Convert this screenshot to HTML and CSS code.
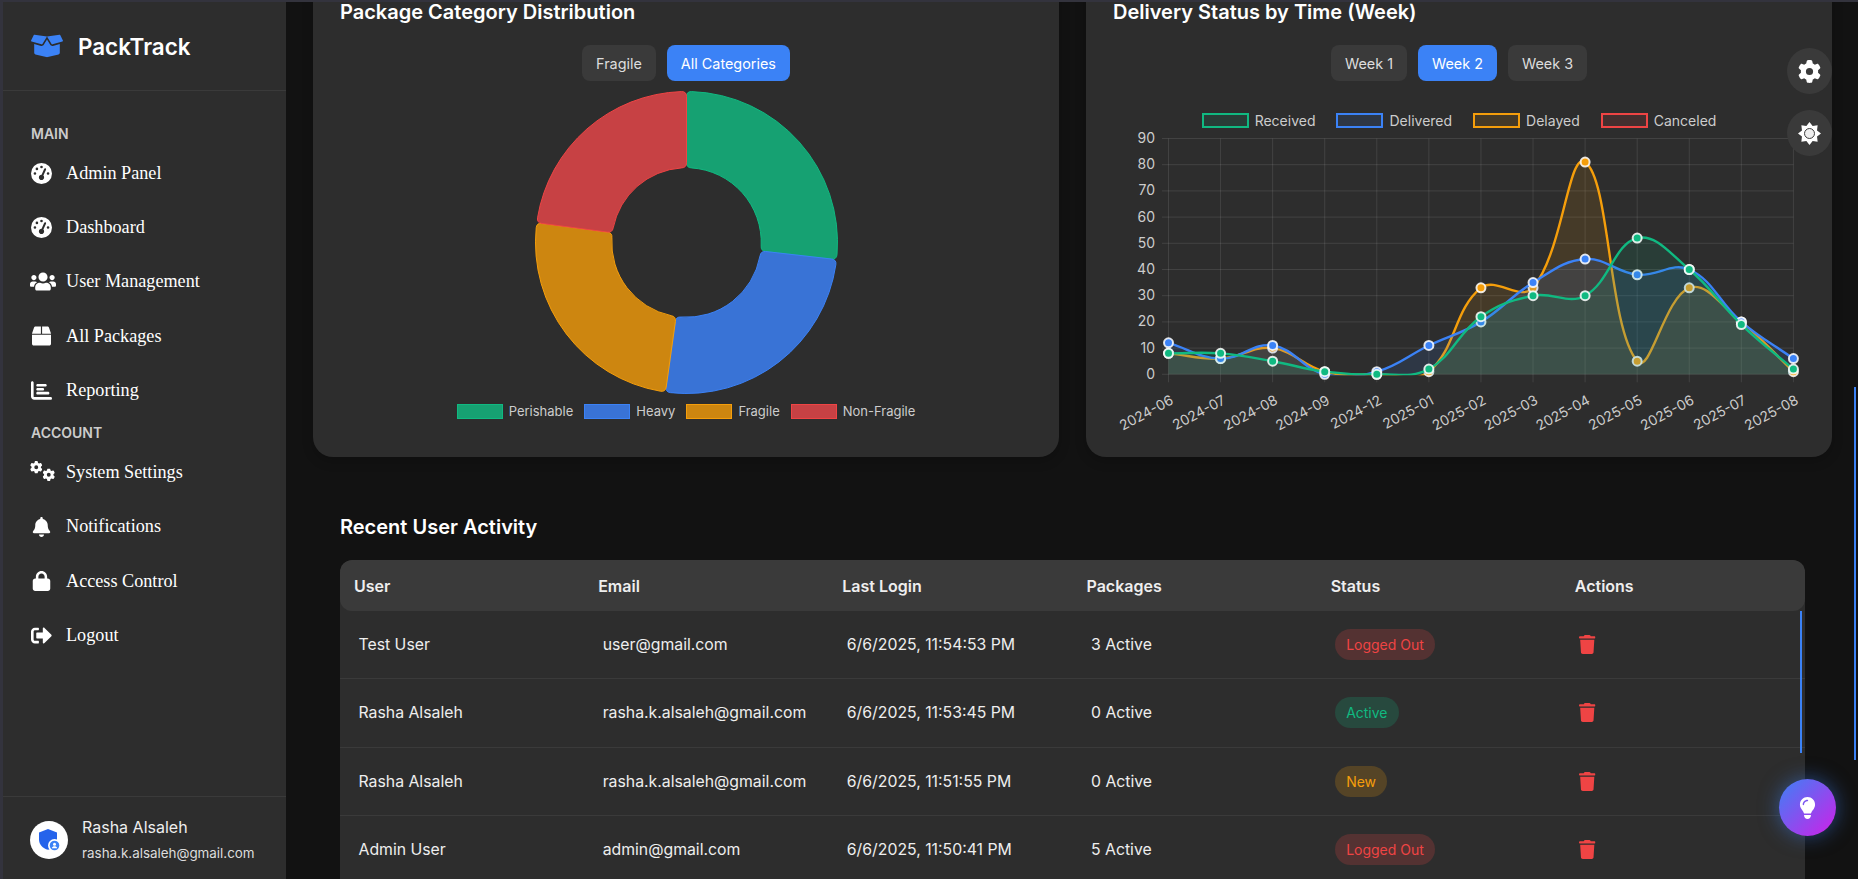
FILE: index.html
```html
<!DOCTYPE html>
<html lang="en">
<head>
  <meta charset="UTF-8" />
  <meta name="viewport" content="width=device-width, initial-scale=1.0" />
  <title>PackTrack Admin</title>
  <link rel="stylesheet" href="styles.css">
</head>
<body>
  <svg class="icon-defs" width="0" height="0">
    <symbol id="i-gauge" viewBox="0 0 512 512"><path d="M0 256a256 256 0 1 1 512 0A256 256 0 1 1 0 256zM288 96a32 32 0 1 0 -64 0 32 32 0 1 0 64 0zM256 416c35.3 0 64-28.7 64-64c0-17.4-6.9-33.1-18.1-44.6L366 161.7c5.3-12.1-.2-26.3-12.3-31.6s-26.3 .2-31.6 12.3L257.9 288c-.6 0-1.3 0-1.9 0c-35.3 0-64 28.7-64 64s28.7 64 64 64zM176 144a32 32 0 1 0 -64 0 32 32 0 1 0 64 0zM96 288a32 32 0 1 0 0-64 32 32 0 1 0 0 64zm352-32a32 32 0 1 0 -64 0 32 32 0 1 0 64 0z"/></symbol>
    <symbol id="i-gear" viewBox="0 0 512 512"><path d="M495.9 166.6c3.2 8.7 .5 18.4-6.4 24.6l-43.3 39.4c1.1 8.3 1.7 16.8 1.7 25.4s-.6 17.1-1.7 25.4l43.3 39.4c6.9 6.2 9.6 15.9 6.4 24.6c-4.4 11.9-9.7 23.3-15.8 34.3l-4.7 8.1c-6.6 11-14 21.4-22.1 31.2c-5.9 7.2-15.7 9.6-24.5 6.8l-55.7-17.7c-13.4 10.3-28.2 18.9-44 25.4l-12.5 57.1c-2 9.1-9 16.3-18.2 17.8c-13.8 2.3-28 3.5-42.5 3.5s-28.7-1.2-42.5-3.5c-9.2-1.5-16.2-8.7-18.2-17.8l-12.5-57.1c-15.8-6.5-30.6-15.1-44-25.4L83.1 425.9c-8.8 2.8-18.6 .3-24.5-6.8c-8.1-9.8-15.5-20.2-22.1-31.2l-4.7-8.1c-6.1-11-11.4-22.4-15.8-34.3c-3.2-8.7-.5-18.4 6.4-24.6l43.3-39.4C64.6 273.1 64 264.6 64 256s.6-17.1 1.7-25.4L22.4 191.2c-6.9-6.2-9.6-15.9-6.4-24.6c4.4-11.9 9.7-23.3 15.8-34.3l4.7-8.1c6.6-11 14-21.4 22.1-31.2c5.9-7.2 15.7-9.6 24.5-6.8l55.7 17.7c13.4-10.3 28.2-18.9 44-25.4l12.5-57.1c2-9.1 9-16.3 18.2-17.8C227.3 1.2 241.5 0 256 0s28.7 1.2 42.5 3.5c9.2 1.5 16.2 8.7 18.2 17.8l12.5 57.1c15.8 6.5 30.6 15.1 44 25.4l55.7-17.7c8.8-2.8 18.6-.3 24.5 6.8c8.1 9.8 15.5 20.2 22.1 31.2l4.7 8.1c6.1 11 11.4 22.4 15.8 34.3zM256 336a80 80 0 1 0 0-160 80 80 0 1 0 0 160z"/></symbol>
    <symbol id="i-trash" viewBox="0 0 448 512"><path d="M135.2 17.7L128 32H32C14.3 32 0 46.3 0 64S14.3 96 32 96H416c17.7 0 32-14.3 32-32s-14.3-32-32-32H320l-7.2-14.3C307.4 6.8 296.3 0 284.2 0H163.8c-12.1 0-23.2 6.8-28.6 17.7zM416 128H32L53.2 467c1.6 25.3 22.6 45 47.9 45H346.9c25.3 0 46.3-19.7 47.9-45L416 128z"/></symbol>
  </svg>

  <aside class="sidebar">
    <div class="brand">
      <svg class="brand-logo" viewBox="0 0 640 512"><path d="M425.7 256c-16.9 0-32.8-9-41.4-23.4L320 126l-64.2 106.6c-8.7 14.5-24.6 23.5-41.5 23.5-4.5 0-9-.6-13.3-1.9L64 215v178c0 14.7 10 27.5 24.2 31l216.2 54.1c10.2 2.5 20.9 2.5 31 0L551.8 424c14.2-3.6 24.2-16.4 24.2-31V215l-137 39.1c-4.3 1.3-8.8 1.9-13.3 1.9zm212.6-112.2L586.8 41c-3.1-6.2-9.8-9.8-16.7-8.9L320 64l91.7 152.1c3.8 6.3 11.4 9.3 18.5 7.3l197.9-56.5c9.9-2.9 14.7-13.9 10.2-23.1zM53.2 41L1.7 143.8c-4.6 9.2.3 20.2 10.1 23l197.9 56.5c7.1 2 14.7-1 18.5-7.3L320 64 69.8 32.1c-6.9-.8-13.5 2.7-16.6 8.9z"/></svg>
      <span class="brand-name">PackTrack</span>
    </div>

    <nav class="nav">
      <div class="nav-label">MAIN</div>
      <a class="nav-item"><span class="nav-icon"><svg class="ic-20" viewBox="0 0 512 512"><use href="#i-gauge"/></svg></span>Admin Panel</a>
      <a class="nav-item"><span class="nav-icon"><svg class="ic-20" viewBox="0 0 512 512"><use href="#i-gauge"/></svg></span>Dashboard</a>
      <a class="nav-item"><span class="nav-icon"><svg class="ic-users" viewBox="0 0 640 512"><path d="M96 224c35.3 0 64-28.7 64-64s-28.7-64-64-64-64 28.7-64 64 28.7 64 64 64zm448 0c35.3 0 64-28.7 64-64s-28.7-64-64-64-64 28.7-64 64 28.7 64 64 64zm32 32h-64c-17.6 0-33.5 7.1-45.1 18.6 40.3 22.1 68.9 62 75.1 109.4h66c17.7 0 32-14.3 32-32v-32c0-35.3-28.7-64-64-64zm-256 0c61.9 0 112-50.1 112-112S381.9 32 320 32 208 82.1 208 144s50.1 112 112 112zm76.8 32h-8.3c-20.8 10-43.9 16-68.5 16s-47.6-6-68.5-16h-8.3C179.6 288 128 339.6 128 403.2V432c0 26.5 21.5 48 48 48h288c26.5 0 48-21.5 48-48v-28.8c0-63.6-51.6-115.2-115.2-115.2zm-223.7-13.4C161.5 263.1 145.6 256 128 256H64c-35.3 0-64 28.7-64 64v32c0 17.7 14.3 32 32 32h65.9c6.3-47.4 34.9-87.3 75.2-109.4z"/></svg></span>User Management</a>
      <a class="nav-item"><span class="nav-icon"><svg class="ic-box" viewBox="0 0 512 512"><path d="M509.5 184.6L458.9 32.8C452.4 13.2 434.1 0 413.4 0H272v192h238.7c-.4-2.5-.4-5-1.2-7.4zM240 0H98.6c-20.7 0-39 13.2-45.5 32.8L2.5 184.6c-.8 2.4-.8 4.9-1.2 7.4H240V0zM0 224v240c0 26.5 21.5 48 48 48h416c26.5 0 48-21.5 48-48V224H0z"/></svg></span>All Packages</a>
      <a class="nav-item"><span class="nav-icon"><svg class="ic-20" viewBox="0 0 512 512"><path d="M32 32c17.7 0 32 14.3 32 32V400c0 8.8 7.2 16 16 16H480c17.7 0 32 14.3 32 32s-14.3 32-32 32H80c-44.2 0-80-35.8-80-80V64C0 46.3 14.3 32 32 32zm96 96c0-17.7 14.3-32 32-32l192 0c17.7 0 32 14.3 32 32s-14.3 32-32 32l-192 0c-17.7 0-32-14.3-32-32zm32 64H288c17.7 0 32 14.3 32 32s-14.3 32-32 32H160c-17.7 0-32-14.3-32-32s14.3-32 32-32zm0 96H416c17.7 0 32 14.3 32 32s-14.3 32-32 32H160c-17.7 0-32-14.3-32-32s14.3-32 32-32z"/></svg></span>Reporting</a>

      <div class="nav-label">ACCOUNT</div>
      <a class="nav-item"><span class="nav-icon"><svg class="ic-gears" viewBox="0 0 25 20"><use href="#i-gear" x="0" y="0" width="12.5" height="12.5"/><use href="#i-gear" x="12.5" y="7.500" width="12.5" height="12.5"/></svg></span>System Settings</a>
      <a class="nav-item"><span class="nav-icon"><svg class="ic-box" viewBox="0 0 448 512"><path d="M224 0c-17.7 0-32 14.3-32 32V51.2C119 66 64 130.6 64 208v18.8c0 47-17.3 92.4-48.5 127.6l-7.4 8.3c-8.4 9.4-10.4 22.9-5.3 34.4S19.4 416 32 416H416c12.6 0 24-7.4 29.2-18.9s3.1-25-5.3-34.4l-7.4-8.3C401.3 319.2 384 273.9 384 226.8V208c0-77.4-55-142-128-156.8V32c0-17.7-14.3-32-32-32zm45.3 493.3c12-12 18.7-28.3 18.7-45.3H224 160c0 17 6.7 33.3 18.7 45.3s28.3 18.7 45.3 18.7s33.3-6.7 45.3-18.7z"/></svg></span>Notifications</a>
      <a class="nav-item"><span class="nav-icon"><svg class="ic-box" viewBox="0 0 448 512"><path d="M144 144v48H304V144c0-44.2-35.8-80-80-80s-80 35.8-80 80zM80 192V144C80 64.5 144.5 0 224 0s144 64.5 144 144v48h16c35.3 0 64 28.7 64 64V448c0 35.3-28.7 64-64 64H64c-35.3 0-64-28.7-64-64V256c0-35.3 28.7-64 64-64H80z"/></svg></span>Access Control</a>
      <a class="nav-item"><span class="nav-icon"><svg class="ic-20" viewBox="0 0 512 512"><path d="M497 273L329 441c-15 15-41 4.5-41-17v-96H152c-13.3 0-24-10.7-24-24v-96c0-13.3 10.7-24 24-24h136V88c0-21.4 25.9-32 41-17l168 168c9.3 9.4 9.3 24.6 0 34zM192 436v-40c0-6.6-5.4-12-12-12H96c-17.7 0-32-14.3-32-32V160c0-17.7 14.3-32 32-32h84c6.6 0 12-5.4 12-12V76c0-6.6-5.4-12-12-12H96c-53 0-96 43-96 96v192c0 53 43 96 96 96h84c6.6 0 12-5.4 12-12z"/></svg></span>Logout</a>
    </nav>

    <div class="profile">
      <svg class="avatar" viewBox="0 0 38 38">
        <circle cx="19" cy="19" r="19" fill="#fff"/>
        <path d="M18 8l9 3.4v7c0 5-3.6 8.7-9 10.4c-5.400-1.700-9-5.400-9-10.400v-7z" fill="#2563eb"/>
        <circle cx="24.500" cy="24.500" r="6.500" fill="#fff"/>
        <circle cx="24.500" cy="24.500" r="4.800" fill="#3b82f6"/>
        <circle cx="24.500" cy="23.200" r="1.500" fill="#fff"/>
        <path d="M21.800 27.300c.5-1.400 1.500-2 2.700-2s2.200.6 2.700 2z" fill="#fff"/>
      </svg>
      <div>
        <div class="profile-name">Rasha Alsaleh</div>
        <div class="profile-email">rasha.k.alsaleh@gmail.com</div>
      </div>
    </div>
  </aside>

  <main class="main">
    <div class="charts-row">
      <section class="card">
        <h2 class="card-title">Package Category Distribution</h2>
        <div class="btn-row">
          <button class="pill-btn">Fragile</button>
          <button class="pill-btn active">All Categories</button>
        </div>
        <svg class="donut" viewBox="-152 -152 304 304">
          <path class="seg-green" d="M5.02 -151.42A151.5 151.5 0 0 1 151.01 12.15Q150.53 17.15 145.56 16.58L79.49 9.06Q74.52 8.49 74.92 3.53A75 75 0 0 0 4.97 -74.84Q0 -75 0 -80L0 -146.5Q0 -151.5 5.02 -151.42Z"/>
          <path class="seg-blue" d="M149.87 22.13A151.5 151.5 0 0 1 -16.1 150.64Q-21.08 150.03 -20.39 145.07L-11.13 79.22Q-10.44 74.27 -5.49 74.8A75 75 0 0 0 73.79 13.41Q74.52 8.49 79.49 9.06L145.56 16.58Q150.53 17.15 149.87 22.13Z"/>
          <path class="seg-orange" d="M-26.05 149.24A151.5 151.5 0 0 1 -150.78 -14.78Q-150.2 -19.78 -145.25 -19.12L-79.32 -10.44Q-74.36 -9.79 -74.84 -4.84A75 75 0 0 0 -15.34 73.42Q-10.44 74.27 -11.13 79.22L-20.39 145.07Q-21.08 150.03 -26.05 149.24Z"/>
          <path class="seg-red" d="M-149.47 -24.74A151.5 151.5 0 0 1 -5.02 -151.42Q0 -151.5 0 -146.5L0 -80Q0 -75 -4.97 -74.84A75 75 0 0 0 -73.55 -14.7Q-74.36 -9.79 -79.32 -10.44L-145.25 -19.12Q-150.2 -19.78 -149.47 -24.74Z"/>
        </svg>
        <div class="legend">
          <span class="legend-item"><i class="swatch sw-green"></i>Perishable</span>
          <span class="legend-item"><i class="swatch sw-blue"></i>Heavy</span>
          <span class="legend-item"><i class="swatch sw-orange"></i>Fragile</span>
          <span class="legend-item"><i class="swatch sw-red"></i>Non-Fragile</span>
        </div>
      </section>

      <section class="card">
        <h2 class="card-title">Delivery Status by Time (Week)</h2>
        <div class="btn-row">
          <button class="pill-btn">Week 1</button>
          <button class="pill-btn active">Week 2</button>
          <button class="pill-btn">Week 3</button>
        </div>
        <div class="legend legend-line">
          <span class="legend-item"><i class="swatch ln-green"></i>Received</span>
          <span class="legend-item"><i class="swatch ln-blue"></i>Delivered</span>
          <span class="legend-item"><i class="swatch ln-orange"></i>Delayed</span>
          <span class="legend-item"><i class="swatch ln-red"></i>Canceled</span>
        </div>
        <svg id="statusChart" class="line-chart" width="692" height="315" viewBox="0 0 692 315"></svg>
      </section>
    </div>

    <section class="activity">
      <h2 class="card-title activity-title">Recent User Activity</h2>
      <div class="table-wrap">
        <table class="activity-table">
          <thead>
            <tr><th>User</th><th>Email</th><th>Last Login</th><th>Packages</th><th>Status</th><th>Actions</th></tr>
          </thead>
          <tbody>
            <tr>
              <td>Test User</td><td>user@gmail.com</td><td>6/6/2025, 11:54:53 PM</td><td>3 Active</td>
              <td><span class="badge badge-out">Logged Out</span></td>
              <td><svg class="trash" viewBox="0 0 448 512"><use href="#i-trash"/></svg></td>
            </tr>
            <tr>
              <td>Rasha Alsaleh</td><td>rasha.k.alsaleh@gmail.com</td><td>6/6/2025, 11:53:45 PM</td><td>0 Active</td>
              <td><span class="badge badge-active">Active</span></td>
              <td><svg class="trash" viewBox="0 0 448 512"><use href="#i-trash"/></svg></td>
            </tr>
            <tr>
              <td>Rasha Alsaleh</td><td>rasha.k.alsaleh@gmail.com</td><td>6/6/2025, 11:51:55 PM</td><td>0 Active</td>
              <td><span class="badge badge-new">New</span></td>
              <td><svg class="trash" viewBox="0 0 448 512"><use href="#i-trash"/></svg></td>
            </tr>
            <tr>
              <td>Admin User</td><td>admin@gmail.com</td><td>6/6/2025, 11:50:41 PM</td><td>5 Active</td>
              <td><span class="badge badge-out">Logged Out</span></td>
              <td><svg class="trash" viewBox="0 0 448 512"><use href="#i-trash"/></svg></td>
            </tr>
          </tbody>
        </table>
        <div class="table-thumb"></div>
      </div>
    </section>
  </main>

  <div class="page-thumb"></div>
  <button class="float-btn float-gear"><svg class="ic-float" viewBox="0 0 512 512"><use href="#i-gear"/></svg></button>
  <button class="float-btn float-sun">
    <svg class="ic-float" viewBox="0 0 24 24">
      <polygon points="12,0 15.25,4.15 20.49,3.51 19.85,8.75 24,12 19.85,15.25 20.49,20.49 15.25,19.85 12,24 8.75,19.85 3.51,20.49 4.15,15.25 0,12 4.15,8.75 3.51,3.51 8.75,4.15"/>
      <circle cx="12" cy="12" r="5.200" fill="#eee" stroke="#333" stroke-width="1"/>
    </svg>
  </button>
  <button class="fab">
    <svg class="ic-bulb" viewBox="0 0 384 512"><path d="M272 384c9.600-31.900 29.500-59.100 49.200-86.200l0 0c5.200-7.100 10.400-14.200 15.400-21.400c19.800-28.500 31.400-63 31.400-100.300C368 78.800 289.200 0 192 0S16 78.800 16 176c0 37.300 11.600 71.900 31.400 100.300c5 7.200 10.200 14.300 15.400 21.400l0 0c19.800 27.100 39.700 54.400 49.200 86.200H272zM192 512c44.200 0 80-35.800 80-80V416H112v16c0 44.200 35.800 80 80 80zM112 176c0 8.800-7.200 16-16 16s-16-7.200-16-16c0-61.900 50.100-112 112-112c8.800 0 16 7.200 16 16s-7.200 16-16 16c-44.200 0-80 35.800-80 80z"/></svg>
  </button>

  <script src="chart.js"></script>
</body>
</html>
```

FILE: styles.css
```css
* {
  box-sizing: border-box;
}
html, body {
  height: 100%;
}
body {
  margin: 0;
  display: flex;
  overflow: hidden;
  font-family: "Inter", "Liberation Sans", sans-serif;
  color: #fff;
  background: #121212;
  border-top: 2px solid #33333d;
  border-left: 3px solid #33333d;
}
.icon-defs {
  position: absolute;
}
svg {
  display: block;
  fill: currentColor;
}

/* sidebar */
.sidebar {
  width: 283px;
  flex: none;
  display: flex;
  flex-direction: column;
  background: #2d2d2d;
}
.brand {
  height: 89px;
  display: flex;
  align-items: center;
  gap: 15px;
  padding-left: 28px;
  border-bottom: 1px solid #3a3a3a;
}
.brand-logo {
  width: 32px;
  height: 26px;
  color: #3b82f6;
}
.brand-name {
  font-size: 22.4px;
  font-weight: 600;
}
.nav {
  padding: 27px 0 0 28px;
}
.nav-label {
  font-size: 14px;
  line-height: 17px;
  font-weight: 600;
  color: #ccc;
  margin: 7px 0 4px;
}
.nav-item {
  height: 54.3px;
  display: flex;
  align-items: center;
  font-family: "Liberation Serif", serif;
  font-size: 18.2px;
  color: #fff;
}
.nav-icon {
  width: 35px;
  flex: none;
  display: flex;
}
.ic-20 {
  width: 21px;
  height: 21px;
}
.ic-users {
  width: 26px;
  height: 21px;
  margin-left: -1px;
}
.ic-box {
  width: 19px;
  height: 20px;
  margin-left: 1px;
}
.ic-gears {
  width: 25px;
  height: 20px;
  margin-left: -1px;
  margin-top: -4px;
}
.profile {
  margin-top: auto;
  height: 83px;
  display: flex;
  align-items: center;
  gap: 14px;
  padding: 3px 0 0 27px;
  border-top: 1px solid #3a3a3a;
}
.avatar {
  width: 38px;
  height: 38px;
  flex: none;
}
.profile-name {
  font-size: 16px;
  line-height: 20px;
  color: #eee;
  margin-bottom: 6px;
}
.profile-email {
  font-size: 13.4px;
  line-height: 20px;
  color: #ddd;
}

/* main content, scrolled a little way down */
.main {
  flex: 1;
  min-width: 0;
  padding: 0 26px 0 27px;
}
.charts-row {
  display: grid;
  grid-template-columns: 1fr 1fr;
  gap: 27px;
  margin-top: -22px;
}
.card {
  height: 477px;
  padding: 20px 27px 0;
  background: #2d2d2d;
  border-radius: 20px;
  box-shadow: 0 4px 12px rgba(0,0,0,0.2);
}
.card-title {
  margin: 0;
  font-size: 20px;
  line-height: 24px;
  font-weight: 600;
  color: #fff;
}
.btn-row {
  display: flex;
  justify-content: center;
  gap: 11px;
  margin-top: 21px;
}
.pill-btn {
  height: 36px;
  padding: 0 14px;
  border: none;
  border-radius: 8px;
  font-family: inherit;
  font-size: 14.4px;
  color: #ddd;
  background: #3a3a3a;
}
.pill-btn.active {
  color: #fff;
  background: #3b82f6;
}

/* donut */
.donut {
  width: 303px;
  height: 303px;
  margin: 10px auto 0;
}
.donut path {
  stroke-width: 1;
}
.seg-green { fill: #16a172; stroke: #10b981; }
.seg-blue { fill: #3973d6; stroke: #3b82f6; }
.seg-orange { fill: #cd8610; stroke: #f59e0b; }
.seg-red { fill: #c74144; stroke: #ef4444; }

.legend {
  display: flex;
  justify-content: center;
  gap: 11px;
  margin-top: 10px;
  font-size: 13px;
  line-height: 15px;
  color: #ccc;
}
.legend-item {
  display: flex;
  align-items: center;
  gap: 6px;
}
.swatch {
  width: 46px;
  height: 15px;
  border: 1px solid;
}
.sw-green { background: #16a172; border-color: #10b981; }
.sw-blue { background: #3973d6; border-color: #3b82f6; }
.sw-orange { background: #cd8610; border-color: #f59e0b; }
.sw-red { background: #c74144; border-color: #ef4444; }

.legend-line {
  gap: 21px;
  margin-top: 32px;
  font-size: 14px;
}
.legend-line .swatch {
  width: 47px;
  border-width: 2px;
}
.ln-green { background: rgba(16,185,129,0.12); border-color: #10b981; }
.ln-blue { background: rgba(59,130,246,0.12); border-color: #3b82f6; }
.ln-orange { background: rgba(245,158,11,0.12); border-color: #f59e0b; }
.ln-red { background: rgba(239,68,68,0.12); border-color: #ef4444; }

.line-chart {
  margin-top: 2px;
}
.grid-line {
  stroke: rgba(255,255,255,0.1);
  stroke-width: 1;
}
.tick-label {
  font-size: 14px;
  fill: #ccc;
}

/* activity table */
.activity {
  padding: 0 27px;
  margin-top: 58px;
}
.activity-title {
  margin-bottom: 21px;
}
.table-wrap {
  position: relative;
  background: #2d2d2d;
  border-radius: 12px 12px 0 0;
  overflow: hidden;
}
.activity-table {
  width: 100%;
  table-layout: fixed;
  border-collapse: separate;
  border-spacing: 0;
}
.activity-table th {
  height: 51px;
  padding: 0 14px;
  text-align: left;
  font-size: 16px;
  font-weight: 600;
  color: #eee;
  background: #3a3a3a;
}
.activity-table th:first-child {
  border-radius: 12px 0 0 12px;
}
.activity-table th:last-child {
  border-radius: 0 12px 12px 0;
}
.activity-table td {
  height: 68.3px;
  padding: 0 18.5px;
  font-size: 15.8px;
  color: #eee;
  border-bottom: 1px solid #3a3a3a;
}
.badge {
  display: inline-block;
  padding: 0 11px;
  font-size: 14px;
  line-height: 31px;
  border-radius: 16px;
}
.badge-out { color: #ef4444; background: rgba(239,68,68,0.2); }
.badge-active { color: #10b981; background: rgba(16,185,129,0.2); }
.badge-new { color: #f59e0b; background: rgba(245,158,11,0.2); }
.trash {
  width: 16.500px;
  height: 19px;
  color: #ef4444;
}
.table-thumb {
  position: absolute;
  top: 51px;
  right: 3px;
  width: 2px;
  height: 142px;
  background: #3b82f6;
}
.page-thumb {
  position: fixed;
  top: 387px;
  right: 2px;
  width: 2px;
  height: 373px;
  background: #3b82f6;
}

/* floating buttons */
.float-btn {
  position: fixed;
  right: 26px;
  width: 45px;
  height: 46px;
  padding: 0;
  display: flex;
  align-items: center;
  justify-content: center;
  border: none;
  border-radius: 50%;
  color: #fff;
  background: #3a3a3a;
}
.float-gear {
  top: 48px;
}
.float-sun {
  top: 110px;
}
.ic-float {
  width: 23px;
  height: 23px;
}
.fab {
  position: fixed;
  right: 22px;
  bottom: 43px;
  width: 57px;
  height: 57px;
  padding: 0;
  display: flex;
  align-items: center;
  justify-content: center;
  border: none;
  border-radius: 50%;
  color: #fff;
  background: linear-gradient(135deg, #3b82f6, #d01fe8);
  box-shadow: 0 0 20px rgba(59,130,246,0.5);
}
.ic-bulb {
  width: 17px;
  height: 22px;
}
```

FILE: chart.js
```js
// Delivery status line chart, drawn as svg
const svg = document.getElementById("statusChart");
const NS = "http://www.w3.org/2000/svg";

const labels = ["2024-06", "2024-07", "2024-08", "2024-09", "2024-12", "2025-01", "2025-02", "2025-03", "2025-04", "2025-05", "2025-06", "2025-07", "2025-08"];

// drawn back to front, like chart.js does
const datasets = [
  { color: "#f59e0b", fill: "rgba(245,158,11,0.12)", data: [8, 6, 10, 1, 0, 1, 33, 33, 81, 5, 33, 20, 1] },
  { color: "#3b82f6", fill: "rgba(59,130,246,0.12)", data: [12, 6, 11, 0, 1, 11, 20, 35, 44, 38, 40, 20, 6] },
  { color: "#10b981", fill: "rgba(16,185,129,0.12)", data: [8, 8, 5, 1, 0, 2, 22, 30, 30, 52, 40, 19, 2] }
];

const left = 55.5, right = 680.4, zero = 244.3, perUnit = 2.62;
const step = (right - left) / (labels.length - 1);
const xAt = (i) => left + i * step;
const yAt = (v) => zero - v * perUnit;

function add(name, attrs, text, parent) {
  const el = document.createElementNS(NS, name);
  for (const key in attrs) el.setAttribute(key, attrs[key]);
  if (text) el.textContent = text;
  (parent || svg).appendChild(el);
  return el;
}

// lines stop at the plot area, the spline overshoots below zero otherwise
const clip = add("clipPath", { id: "plotArea" });
add("rect", { x: left - 2, y: yAt(90) - 2, width: right - left + 4, height: zero - yAt(90) + 3 }, "", clip);

// grid and axis labels
for (let v = 0; v <= 90; v += 10) {
  add("line", { class: "grid-line", x1: 49, x2: right, y1: yAt(v), y2: yAt(v) });
  add("text", { class: "tick-label", x: 42, y: yAt(v) + 4.5, "text-anchor": "end" }, String(v));
}
labels.forEach((label, i) => {
  const x = xAt(i);
  add("line", { class: "grid-line", x1: x, x2: x, y1: yAt(90), y2: zero + 8 });
  add("text", { class: "tick-label", x: x + 6, y: zero + 29, "text-anchor": "end", transform: `rotate(-28 ${x + 6} ${zero + 29})` }, label);
});

// same spline as chart.js with tension 0.4
function controlPoints(pts) {
  return pts.map((cur, i) => {
    const prev = pts[i - 1] || cur;
    const next = pts[i + 1] || cur;
    const d01 = Math.hypot(cur.x - prev.x, cur.y - prev.y);
    const d12 = Math.hypot(next.x - cur.x, next.y - cur.y);
    const total = d01 + d12 || 1;
    const fa = 0.4 * d01 / total;
    const fb = 0.4 * d12 / total;
    return {
      inX: cur.x - fa * (next.x - prev.x),
      inY: cur.y - fa * (next.y - prev.y),
      outX: cur.x + fb * (next.x - prev.x),
      outY: cur.y + fb * (next.y - prev.y)
    };
  });
}

datasets.forEach((set) => {
  const pts = set.data.map((v, i) => ({ x: xAt(i), y: yAt(v) }));
  const cp = controlPoints(pts);
  let d = `M${pts[0].x} ${pts[0].y}`;
  for (let i = 1; i < pts.length; i++) {
    d += `C${cp[i - 1].outX} ${cp[i - 1].outY} ${cp[i].inX} ${cp[i].inY} ${pts[i].x} ${pts[i].y}`;
  }
  const last = pts[pts.length - 1];
  add("path", { d: `${d}L${last.x} ${zero}L${pts[0].x} ${zero}Z`, fill: set.fill, stroke: "none", "clip-path": "url(#plotArea)" });
  add("path", { d: d, fill: "none", stroke: set.color, "stroke-width": 2.4, "clip-path": "url(#plotArea)" });
  pts.forEach((p) => {
    add("circle", { cx: p.x, cy: p.y, r: 4.5, fill: set.color, stroke: "rgba(255,255,255,0.85)", "stroke-width": 2 });
  });
});
```
